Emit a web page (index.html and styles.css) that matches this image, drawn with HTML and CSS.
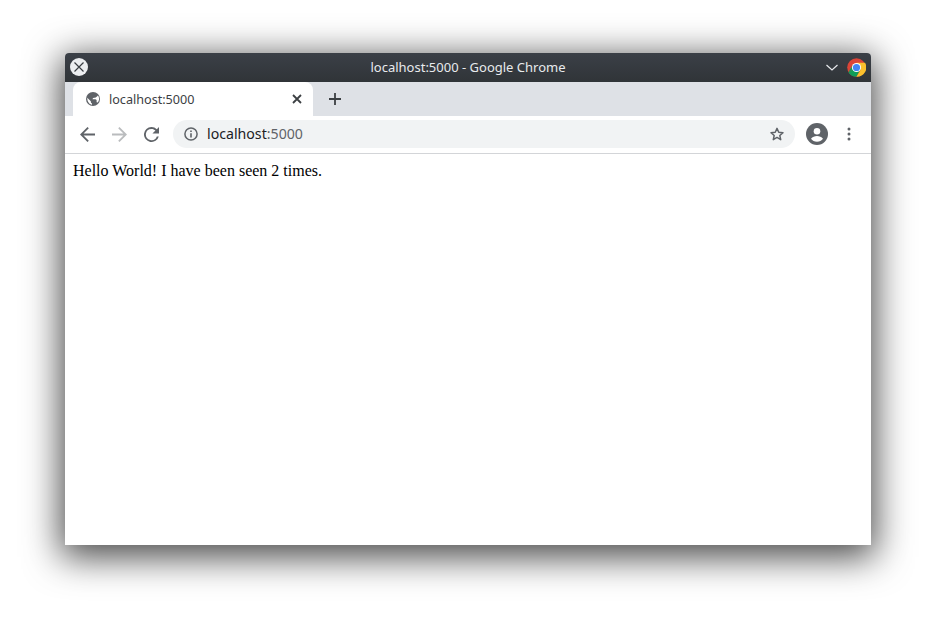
FILE: index.html
```html
<!DOCTYPE html>
<html lang="en">
<head>
<meta charset="utf-8">
<title>localhost:5000 - Google Chrome</title>
<link rel="stylesheet" href="styles.css">
</head>
<body>
<div class="window">
  <header class="titlebar">
    <span class="close-btn">
      <svg width="18" height="18" viewBox="0 0 18 18"><path d="M4.500 4.500l9 9M13.500 4.500l-9 9" stroke="#3a3e43" stroke-width="1.200" fill="none"/></svg>
    </span>
    <span class="title">localhost:5000 - Google Chrome</span>
    <svg class="chevron" width="12" height="7" viewBox="0 0 12 7"><path d="M.5 1L6 6l5.500-5" stroke="#e8eaed" stroke-width="1.200" fill="none"/></svg>
    <svg class="chrome-logo" width="19" height="19" viewBox="0 0 20 20">
      <circle cx="10" cy="10" r="9.800" fill="#db4437"/>
      <path d="M10 10L1.500 14.900A9.800 9.800 0 0 0 10 19.800L14.800 10.800z" fill="#0f9d58"/>
      <path d="M10 5.100H19A9.800 9.800 0 0 1 10 19.800L14.300 12.400z" fill="#fbc02d"/>
      <path d="M1.500 14.900L5.800 7.500 10 10z" fill="#0f9d58"/>
      <circle cx="10" cy="10" r="4.800" fill="#fff"/>
      <circle cx="10" cy="10" r="3.800" fill="#4285f4"/>
    </svg>
  </header>
  <div class="tabstrip">
    <div class="tab">
      <svg class="globe" width="14" height="14" viewBox="0 0 14 14"><circle cx="7" cy="7" r="7" fill="#5f6368"/><path d="M1.300 5.800L4.800 9.300 5 10.800l1 .6v1.400C3.400 12.400 1.100 9.800 1.300 5.800z" fill="#fff"/><path d="M6.500 7.200h3l1.100.8v2.300l1 .3c1-1.100 1.500-2.500 1.500-3.800 0-1.300-.4-2.500-1.100-3.400L9.800 5.500 7 6z" fill="#fff"/></svg>
      <span class="tab-label">localhost:5000</span>
      <svg class="tab-close" width="10" height="10" viewBox="0 0 10 10"><path d="M1 1l8 8M9 1l-8 8" stroke="#3c4043" stroke-width="1.800" fill="none"/></svg>
    </div>
    <svg class="new-tab" width="12" height="12" viewBox="0 0 12 12"><path d="M6 0v12M0 6h12" stroke="#3c4043" stroke-width="1.800" fill="none"/></svg>
  </div>
  <div class="toolbar">
    <svg class="nav-icon" width="15" height="15" viewBox="0 0 16 16"><path d="M16 7H3.800l5.600-5.600L8 0 0 8l8 8 1.400-1.400L3.800 9H16z" fill="#5f6368"/></svg>
    <svg class="nav-icon" width="15" height="15" viewBox="0 0 16 16"><path d="M0 7h12.200L6.600 1.400 8 0l8 8-8 8-1.400-1.400L12.200 9H0z" fill="#babcbe"/></svg>
    <svg class="nav-icon" width="15" height="15" viewBox="0 0 16 16"><path d="M13.650 2.350A7.960 7.960 0 0 0 8 0a8 8 0 1 0 7.730 10h-2.080A6 6 0 1 1 8 2c1.660 0 3.140.69 4.220 1.780L9 7h7V0z" fill="#5f6368"/></svg>
    <div class="omnibox">
      <svg class="info" width="14" height="14" viewBox="0 0 14 14"><circle cx="7" cy="7" r="6.100" stroke="#5f6368" stroke-width="1.500" fill="none"/><path d="M6.200 6.200h1.600v4.200H6.200zM6.200 3.400h1.600V5H6.200z" fill="#5f6368"/></svg>
      <span class="url"><span class="host">localhost</span><span class="port">:5000</span></span>
      <svg class="star" width="16" height="16" viewBox="0 0 24 24"><path d="M12 3.500l2.600 5.900 6.400.6-4.800 4.200 1.400 6.300L12 17.200l-5.600 3.300 1.400-6.300L3 10l6.400-.6z" stroke="#5f6368" stroke-width="2.200" stroke-linejoin="round" fill="none"/></svg>
    </div>
    <svg class="avatar" width="22" height="22" viewBox="0 0 22 22"><circle cx="11" cy="11" r="11" fill="#5f6368"/><circle cx="11" cy="8.200" r="3.300" fill="#fff"/><path d="M5 15.800c1.400-2 3.700-2.800 6-2.800s4.600.8 6 2.800c-1.400 1.800-3.500 2.900-6 2.900s-4.600-1.100-6-2.900z" fill="#fff"/></svg>
    <svg class="menu" width="4" height="14" viewBox="0 0 4 14"><circle cx="2" cy="2" r="1.500" fill="#5f6368"/><circle cx="2" cy="7" r="1.500" fill="#5f6368"/><circle cx="2" cy="12" r="1.500" fill="#5f6368"/></svg>
  </div>
  <main class="content">Hello World! I have been seen 2 times.</main>
</div>
</body>
</html>
```
FILE: styles.css
```css
* { box-sizing: border-box; }
html, body { margin: 0; height: 100%; background: #fff; overflow: hidden; }
body { padding: 53px 65px 77px; }
.window {
  width: 806px;
  height: 492px;
  display: flex;
  flex-direction: column;
  border-radius: 4px 4px 0 0;
  background: #fff;
  box-shadow: 0 8px 36px 4px rgba(0, 0, 0, .72);
}
.titlebar {
  height: 29px;
  flex: none;
  display: flex;
  align-items: center;
  position: relative;
  padding: 0 5px 1px;
  border-radius: 4px 4px 0 0;
  background: linear-gradient(#3b4047, #303438);
}
.close-btn {
  width: 18px;
  height: 18px;
  border-radius: 50%;
  background: #eceef0;
  display: flex;
}
.title {
  position: absolute;
  left: 0;
  right: 0;
  text-align: center;
  font: 13px/29px "Noto Sans", sans-serif;
  color: #e8eaed;
}
.chevron { margin-left: auto; margin-right: 9px; position: relative; }
.chrome-logo { position: relative; }
.tabstrip {
  height: 34px;
  flex: none;
  display: flex;
  align-items: center;
  padding-left: 8px;
  background: #dee1e6;
}
.tab {
  width: 240px;
  height: 34px;
  display: flex;
  align-items: center;
  padding: 0 12px 0 13px;
  background: #fff;
  border-radius: 8px 8px 0 0;
}
.globe { flex: none; }
.tab-label {
  margin-left: 9px;
  font: 12.600px "Noto Sans", sans-serif;
  color: #3c4043;
}
.tab-close { margin-left: auto; position: relative; left: 1px; }
.new-tab { margin-left: 16px; }
.toolbar {
  height: 38px;
  flex: none;
  display: flex;
  align-items: center;
  padding: 0 19px 1px 15px;
  background: #fff;
  border-bottom: 1px solid #d3d5d8;
}
.nav-icon { flex: none; margin-right: 17px; }
.omnibox {
  width: 622px;
  height: 28px;
  margin-left: -3px;
  display: flex;
  align-items: center;
  padding: 0 10px 0 11px;
  border-radius: 14px;
  background: #f1f3f4;
}
.info { flex: none; }
.url { margin-left: 9px; padding-bottom: 2px; font: 14.150px "Noto Sans", sans-serif; }
.host { color: #202124; }
.port { color: #5f6368; }
.star { margin-left: auto; }
.avatar { flex: none; margin-left: 11px; }
.menu { flex: none; margin-left: 19px; }
.content {
  flex: 1;
  padding: 8px;
  font: 16px "Liberation Serif", serif;
  color: #000;
}
```
